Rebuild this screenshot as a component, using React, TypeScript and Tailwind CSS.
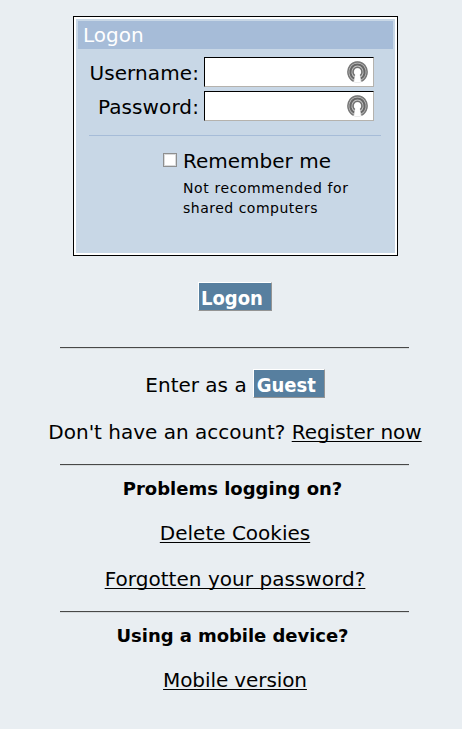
import type { ReactNode } from "react";

type ChildrenProps = { children: ReactNode };

const PasswordManagerIcon = () => (
    <svg viewBox="0 0 22 22" className="h-[22px] w-[21px]" fill="none" preserveAspectRatio="none">
        <circle cx="11" cy="11" r="10.8" fill="#c9c9c9" />
        <path d="M6.8 20A10 10 0 1 1 15.2 20" stroke="#777" strokeWidth="1.5" />
        <path d="M7.4 17.6A7.5 7.5 0 1 1 14.6 17.6" stroke="#666" strokeWidth="2.2" />
        <path d="M8 14.6A4.7 4.7 0 1 1 14 14.6" stroke="#707070" strokeWidth="1.6" />
        <path d="M11 7.2a3.7 3.7 0 0 0-2.3 6.6L7.4 21.6h7.2l-1.3-7.8A3.7 3.7 0 0 0 11 7.2z" fill="#fff" />
    </svg>
);

const Field = ({ label, type }: { label: string; type: string }) => (
    <label className="flex h-[30px] items-center justify-end">
        <span className="mr-[5px] pt-0.5 text-[20px] leading-none tracking-[0.1px]">{label}</span>
        <span className="flex h-[30px] w-[170px] items-center border border-t-black border-l-black border-r-[#b5b2ad] border-b-[#b5b2ad] bg-white pr-[5px]">
            <input type={type} className="h-full min-w-0 flex-1 px-1 outline-none" />
            <PasswordManagerIcon />
        </span>
    </label>
);

const Button = ({ children, className }: ChildrenProps & { className: string }) => (
    <button
        className={`h-[29px] border border-t-white border-l-white border-r-[#949494] border-b-[#949494] bg-[#577f9f] text-left font-['DejaVu_Sans_Condensed','DejaVu_Sans',sans-serif] text-[20px] leading-[25px] font-bold text-white ${className}`}
    >
        <span className="block pt-[3px]">{children}</span>
    </button>
);

const Divider = () => <hr className="mr-px h-0.5 w-[349px] border-t border-b border-t-[#484848] border-b-[#d5dadd]" />;

const TextLink = ({ children }: ChildrenProps) => (
    <a href="#" className="underline decoration-black decoration-1 underline-offset-2 [text-decoration-skip-ink:none]">
        {children}
    </a>
);

const App = () => {
    return (
        <main className="flex h-[729px] w-[462px] flex-col items-center overflow-hidden bg-[#e9eef2] pt-4 pl-2 font-['DejaVu_Sans',sans-serif] text-[20px] leading-[22px] text-black">
            <form className="ml-px h-[240px] w-[325px] border border-black bg-white p-0.5">
                <div className="h-full bg-[#c8d7e6] p-0.5">
                    <h1 className="h-7 bg-[#a6bcd8] pl-[5px] leading-[29px] text-white">Logon</h1>

                    <div className="mt-2 mr-[19px] flex flex-col gap-1">
                        <Field label="Username:" type="text" />
                        <Field label="Password:" type="password" />
                    </div>

                    <hr className="mt-3.5 mr-3 ml-[11px] border-t border-[#a6bcd8]" />

                    <label className="mt-[14px] ml-[85px] flex items-start">
                        <input
                            type="checkbox"
                            className="mt-[3px] size-3.5 appearance-none border border-[#8e8f8f] bg-white inset-ring inset-ring-[#d9dadb]"
                        />
                        <span className="ml-1.5">
                            <span className="block">Remember me</span>
                            <span className="mt-1.5 block w-[180px] text-[14px] leading-5 tracking-[0.6px]">
                                Not recommended for
                                <br />
                                <span className="tracking-[0.5px]">shared computers</span>
                            </span>
                        </span>
                    </label>
                </div>
            </form>

            <Button className="mt-[26px] w-[74px] pl-0.5">Logon</Button>

            <div className="mt-9">
                <Divider />
            </div>

            <p className="mt-5 flex h-[29px] items-center">
                <span className="mr-1.5 pt-0.5 whitespace-nowrap">Enter as a</span>
                <Button className="w-[72px] pl-[3px]">Guest</Button>
            </p>

            <p className="mt-[23px] mb-[21px] whitespace-nowrap">
                Don't have an account? <TextLink>Register now</TextLink>
            </p>
            <Divider />

            <h2 className="mt-3 mr-[5px] text-[18px] font-bold">Problems logging on?</h2>
            <p className="mt-[22px]">
                <TextLink>Delete Cookies</TextLink>
            </p>
            <p className="mt-6 mb-[21px] tracking-[0.04px]">
                <TextLink>Forgotten your password?</TextLink>
            </p>
            <Divider />

            <h2 className="mt-3 mr-[5px] text-[18px] font-bold tracking-[-0.05px]">Using a mobile device?</h2>
            <p className="mt-[22px] tracking-[-0.1px]">
                <TextLink>Mobile version</TextLink>
            </p>
        </main>
    );
};

export default App;
